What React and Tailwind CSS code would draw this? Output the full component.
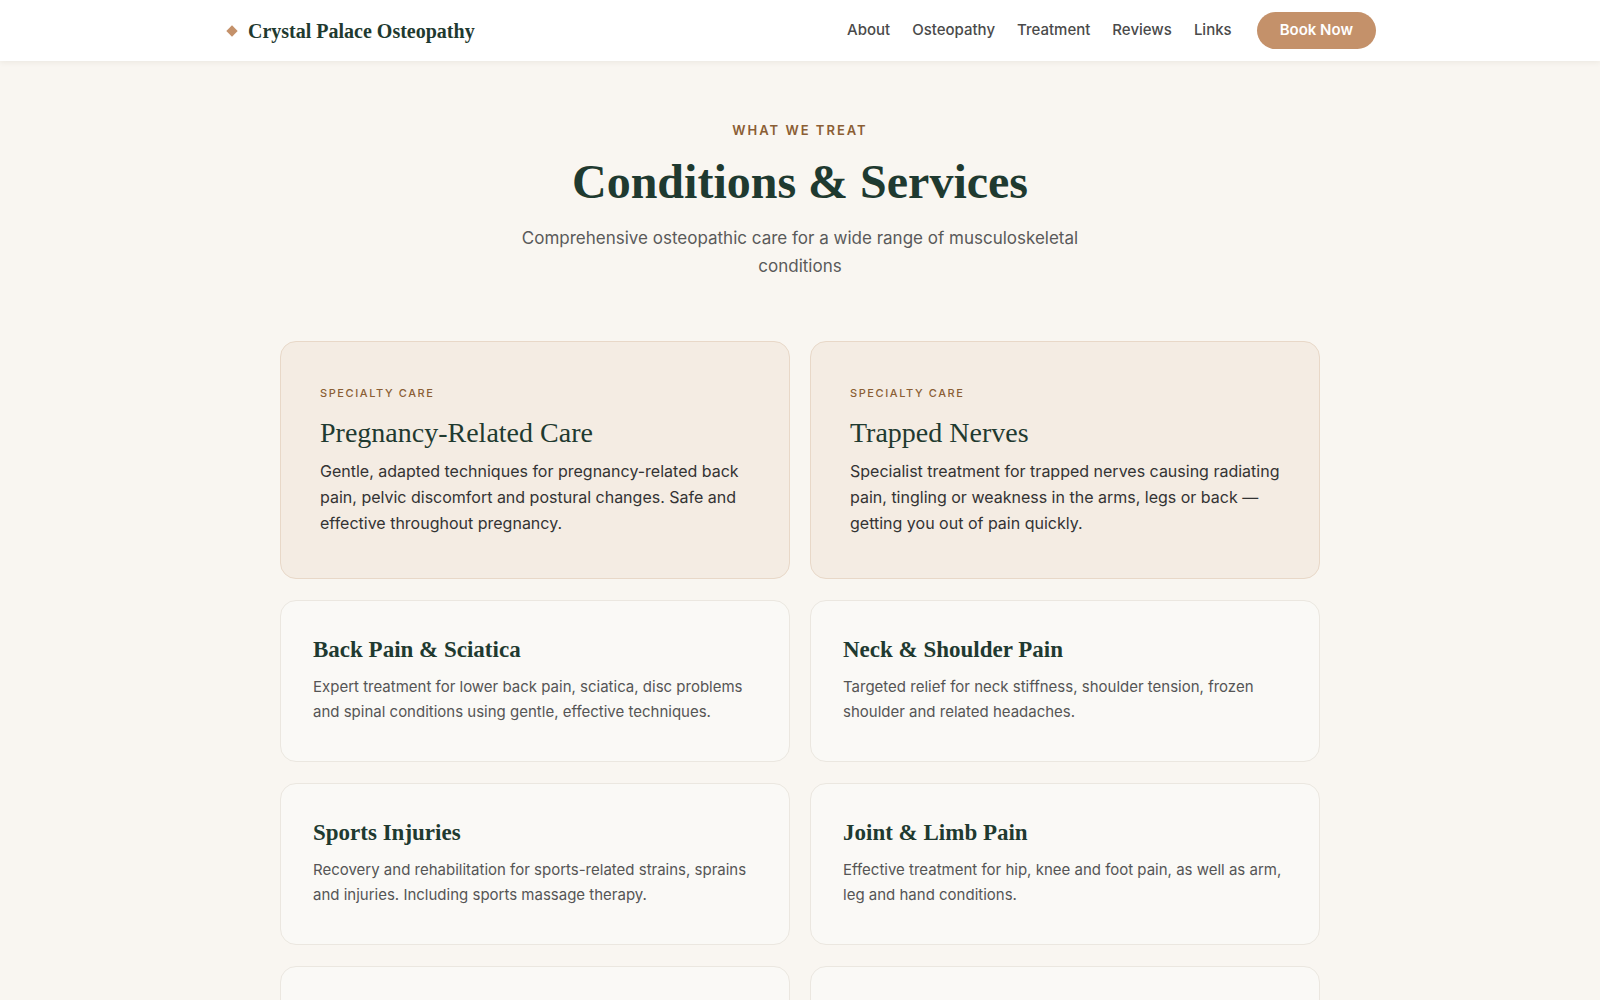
const serif = { fontFamily: '"Liberation Serif", "DejaVu Serif", serif' };

const featured = [
    {
        title: 'Pregnancy-Related Care',
        body: 'Gentle, adapted techniques for pregnancy-related back pain, pelvic discomfort and postural changes. Safe and effective throughout pregnancy.',
    },
    {
        title: 'Trapped Nerves',
        body: 'Specialist treatment for trapped nerves causing radiating pain, tingling or weakness in the arms, legs or back — getting you out of pain quickly.',
    },
];

const services = [
    {
        title: 'Back Pain & Sciatica',
        body: 'Expert treatment for lower back pain, sciatica, disc problems and spinal conditions using gentle, effective techniques.',
    },
    {
        title: 'Neck & Shoulder Pain',
        body: 'Targeted relief for neck stiffness, shoulder tension, frozen shoulder and related headaches.',
    },
    {
        title: 'Sports Injuries',
        body: 'Recovery and rehabilitation for sports-related strains, sprains and injuries. Including sports massage therapy.',
    },
    {
        title: 'Joint & Limb Pain',
        body: 'Effective treatment for hip, knee and foot pain, as well as arm, leg and hand conditions.',
    },
    { title: '', body: '' },
    { title: '', body: '' },
];

const navLinks = ['About', 'Osteopathy', 'Treatment', 'Reviews', 'Links'];

const App = () => {
    return (
        <div className="min-h-screen bg-[#f9f6f1] text-[#2b2b2b]" style={{ fontFamily: 'Inter, "Noto Sans", sans-serif' }}>
            {/* Header */}
            <header className="bg-white shadow-[0_1px_6px_rgba(60,50,30,0.08)] relative z-10">
                <div className="max-w-[1152px] mx-auto h-[61px] flex items-center justify-between">
                    <div className="flex items-center gap-[12px]">
                        <span className="w-[8px] h-[8px] bg-[#c4916a] rotate-45 ml-[4px]"></span>
                        <span className="text-[20px] font-bold text-[#1f3a30]" style={serif}>
                            Crystal Palace Osteopathy
                        </span>
                    </div>
                    <nav className="flex items-center gap-[22px]">
                        {navLinks.map((l) => (
                            <a key={l} className="text-[15px] text-[#4a4a4a] font-medium">{l}</a>
                        ))}
                        <button className="ml-[3px] bg-[#c4916a] text-white text-[15px] font-semibold h-[37px] px-[23px] rounded-full">
                            Book Now
                        </button>
                    </nav>
                </div>
            </header>

            {/* Section */}
            <section className="pt-[60px] pb-10">
                <div className="text-center">
                    <p className="text-[13px] font-semibold tracking-[2px] text-[#8b5e34] uppercase">What we treat</p>
                    <h1 className="mt-[15px] text-[48px] leading-[1.1] font-bold text-[#1f3a30]" style={serif}>
                        Conditions &amp; Services
                    </h1>
                    <p className="mt-[16px] max-w-[576px] mx-auto text-[17px] leading-[28px] text-[#5a5a5a]">
                        Comprehensive osteopathic care for a wide range of musculoskeletal conditions
                    </p>
                </div>

                <div className="w-[1040px] mx-auto mt-[61px] grid grid-cols-2 gap-x-5 gap-y-[21px]">
                    {featured.map((c) => (
                        <div key={c.title} className="bg-[#f4ece3] border border-[#e8d8c8] rounded-2xl px-[39px] pt-[43px] pb-[42px]">
                            <p className="text-[11px] font-medium tracking-[1.6px] text-[#8b5e34] uppercase">Specialty care</p>
                            <h3 className="mt-[13px] text-[28px] leading-[1.3] text-[#1f3a30]" style={serif}>{c.title}</h3>
                            <p className="mt-[7px] text-[16px] leading-[26px] text-[#333333]">{c.body}</p>
                        </div>
                    ))}
                    {services.map((c, i) => (
                        <div key={i} className="bg-[#faf9f6] border border-[#ebe7e0] rounded-2xl px-[32px] pt-[34px] pb-[30px] min-h-[162px]">
                            {c.title && (
                                <>
                                    <h3 className="text-[23px] leading-[1.3] font-bold text-[#1f3a30]" style={serif}>{c.title}</h3>
                                    <p className="mt-[9px] text-[15px] leading-[25px] text-[#555555]">{c.body}</p>
                                </>
                            )}
                        </div>
                    ))}
                </div>
            </section>
        </div>
    );
};

export default App;
